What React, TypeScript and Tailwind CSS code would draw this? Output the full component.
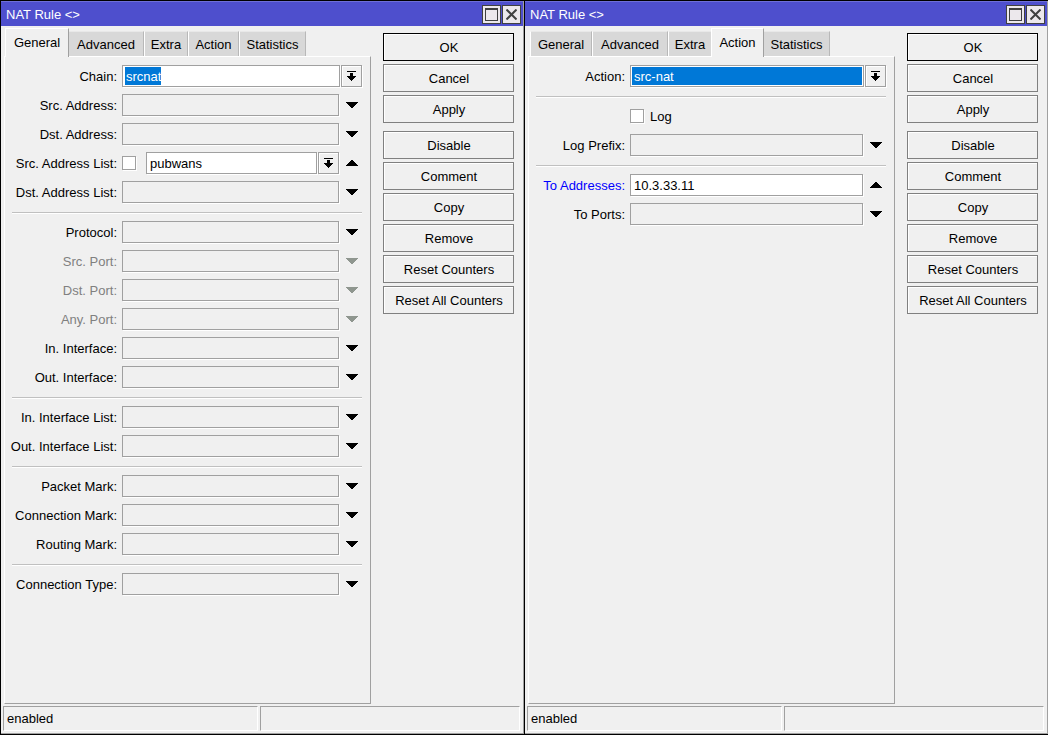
import { ReactNode, useId } from 'react';

const TABS = [
  { name: 'General', width: 'w-[62px]' },
  { name: 'Advanced', width: 'w-[76px]' },
  { name: 'Extra', width: 'w-11' },
  { name: 'Action', width: 'w-[51px]' },
  { name: 'Statistics', width: 'w-[67px]' },
];

const EDGE = 'border border-[#a0a0a0] shadow-[1px_1px_0_#ffffff]';

const Triangle = ({ up = false, muted = false }: { up?: boolean; muted?: boolean }) => (
  <svg
    width="12"
    height="6"
    viewBox="0 0 12 6"
    shapeRendering="crispEdges"
    className={muted ? 'fill-[#8f968f]' : 'fill-black'}
  >
    {up ? (
      <path d="M5 0h2v1h1v1h1v1h1v1h1v1h1v1H0v-1h1v-1h1v-1h1v-1h1v-1h1z" />
    ) : (
      <path d="M0 0h12v1h-1v1h-1v1h-1v1h-1v1h-1v1h-2v-1h-1v-1h-1v-1h-1v-1h-1v-1h-1z" />
    )}
  </svg>
);

const DropButton = ({ label }: { label: string }) => (
  <button
    type="button"
    aria-label={`Choose ${label}`}
    className="flex h-[22px] w-[21px] shrink-0 items-center justify-center border border-[#a0a0a0] bg-[#f0f0f0] shadow-[inset_1px_1px_0_#ffffff,1px_1px_0_#ffffff]"
  >
    <svg width="9" height="10" viewBox="0 0 9 10" shapeRendering="crispEdges" className="fill-black">
      <path d="M0 0h9v1H0zM3 2h3v3h3v1h-1v1h-1v1h-1v1h-1v1h-1v-1h-1v-1h-1v-1h-1v-1h-1v-1h3z" />
    </svg>
  </button>
);

interface RowProps {
  label: string;
  labelWidth: string;
  id: string;
  tone?: string;
  children: ReactNode;
}

const Row = ({ label, labelWidth, id, tone = 'text-black', children }: RowProps) => (
  <div className="flex h-[22px] items-center">
    <label htmlFor={id} className={`mr-[5px] flex shrink-0 justify-end pt-0.5 whitespace-nowrap ${labelWidth} ${tone}`}>
      {label}
    </label>
    {children}
  </div>
);

interface FieldProps {
  label: string;
  value?: string;
  labelWidth?: string;
  tone?: string;
  muted?: boolean;
  invert?: boolean;
  combo?: boolean;
}

const Field = ({ label, value, labelWidth = 'w-[105px]', tone, muted, invert, combo }: FieldProps) => {
  const id = useId();
  const open = value !== undefined;
  return (
    <Row label={label} labelWidth={labelWidth} id={id} tone={muted ? 'text-[#808080]' : tone}>
      {invert && (
        <input
          type="checkbox"
          aria-label={`Not ${label}`}
          className={`mr-2.5 size-3.5 shrink-0 appearance-none bg-white ${EDGE}`}
        />
      )}
      <input
        id={id}
        type="text"
        defaultValue={value}
        disabled={muted}
        className={`h-[22px] min-w-0 flex-1 px-[3px] outline-none ${EDGE} ${open ? 'bg-white' : 'bg-[#f0f0f0]'}`}
      />
      {combo && (
        <div className="ml-px flex">
          <DropButton label={label} />
        </div>
      )}
      <button
        type="button"
        aria-label={`${open ? 'Collapse' : 'Expand'} ${label}`}
        disabled={muted}
        className="ml-0.5 flex h-[22px] w-[21px] shrink-0 items-center justify-center"
      >
        <Triangle up={open} muted={muted} />
      </button>
    </Row>
  );
};

const Separator = () => <hr className="mt-0.5 h-0.5 border-0 border-t border-[#c0c0c0] bg-white" />;

const ChainField = () => {
  const id = useId();
  return (
    <Row label="Chain:" labelWidth="w-[105px]" id={id}>
      <div className={`mr-px flex h-[22px] min-w-0 flex-1 items-center bg-white p-px ${EDGE}`}>
        <input
          id={id}
          type="text"
          defaultValue="srcnat"
          className="ml-px h-[18px] bg-[#0078d7] pl-px text-white outline-none [field-sizing:content]"
        />
      </div>
      <DropButton label="Chain" />
    </Row>
  );
};

const ActionField = () => {
  const id = useId();
  return (
    <Row label="Action:" labelWidth="w-[89px]" id={id}>
      <div className={`mr-px flex h-[22px] min-w-0 flex-1 bg-white p-px ${EDGE}`}>
        <select
          id={id}
          defaultValue="src-nat"
          className="h-[18px] min-w-0 flex-1 appearance-none bg-[#0078d7] px-0.5 pt-0.5 text-white outline-none"
        >
          <option>src-nat</option>
        </select>
      </div>
      <DropButton label="Action" />
    </Row>
  );
};

const GeneralTab = () => (
  <>
    <ChainField />
    <Field label="Src. Address:" />
    <Field label="Dst. Address:" />
    <Field label="Src. Address List:" value="pubwans" invert combo />
    <Field label="Dst. Address List:" />
    <Separator />
    <Field label="Protocol:" />
    <Field label="Src. Port:" muted />
    <Field label="Dst. Port:" muted />
    <Field label="Any. Port:" muted />
    <Field label="In. Interface:" />
    <Field label="Out. Interface:" />
    <Separator />
    <Field label="In. Interface List:" />
    <Field label="Out. Interface List:" />
    <Separator />
    <Field label="Packet Mark:" />
    <Field label="Connection Mark:" />
    <Field label="Routing Mark:" />
    <Separator />
    <Field label="Connection Type:" />
  </>
);

const ActionTab = () => (
  <>
    <ActionField />
    <Separator />
    <label className="ml-[94px] flex h-[22px] items-center gap-1.5">
      <input type="checkbox" className={`size-3.5 appearance-none bg-white ${EDGE}`} />
      <span className="pt-0.5">Log</span>
    </label>
    <Field label="Log Prefix:" labelWidth="w-[89px]" />
    <Separator />
    <Field label="To Addresses:" labelWidth="w-[89px]" value="10.3.33.11" tone="text-[#0000ff]" />
    <Field label="To Ports:" labelWidth="w-[89px]" />
  </>
);

const Tabs = ({ active }: { active: string }) => (
  <div role="tablist" className="ml-0.5 flex h-[30px] items-end">
    {TABS.map(({ name, width }) => (
      <div key={name} className={`flex shrink-0 ${width}`}>
        <button
          type="button"
          role="tab"
          aria-selected={name === active}
          className={
            name === active
              ? 'relative -mx-px -mb-px h-[29px] flex-1 border-t border-r border-l border-t-white border-r-[#a0a0a0] border-l-white bg-[#f0f0f0]'
              : 'h-[25px] flex-1 border-t border-r border-l border-t-[#e8e8e8] border-r-[#b8b8b8] border-l-white bg-[#d8d8d8] pt-0.5'
          }
        >
          {name}
        </button>
      </div>
    ))}
  </div>
);

const ActionButton = ({ name, primary = false }: { name: string; primary?: boolean }) => (
  <button
    type="button"
    className={`h-7 border bg-[#f0f0f0] pt-0.5 pl-px whitespace-nowrap shadow-[inset_1px_1px_0_#ffffff] ${
      primary ? 'border-black' : 'border-[#808080]'
    }`}
  >
    {name}
  </button>
);

const TitleButton = ({ label, children }: { label: string; children: ReactNode }) => (
  <button
    type="button"
    aria-label={label}
    className="flex size-[19px] items-center justify-center border border-[#404040] bg-[#ece8ec]"
  >
    {children}
  </button>
);

const RuleWindow = ({ active, children }: { active: string; children: ReactNode }) => (
  <section className="flex min-w-0 flex-1 flex-col border-t border-b border-l border-black">
    <div className="flex flex-1 flex-col border-r border-b border-[#a0a0a0] bg-[#f0f0f0]">
      <header className="flex h-[25px] items-center border-t border-[#6e6fd8] bg-[#4e4fcd] pt-px pr-0.5 pl-[5px] text-white">
        <h2 className="flex-1 pt-px">NAT Rule &lt;&gt;</h2>
        <div className="flex gap-px">
          <TitleButton label="Maximize">
            <svg width="13" height="13" viewBox="0 0 13 13" shapeRendering="crispEdges" className="fill-[#404040]">
              <path fillRule="evenodd" d="M0 0h13v13H0zM1 2v10h11V2z" />
            </svg>
          </TitleButton>
          <TitleButton label="Close">
            <svg width="11" height="11" viewBox="0 0 11 11" className="stroke-[#404040]" strokeWidth="2">
              <path d="M0.5 0.5l10 10M10.5 0.5l-10 10" />
            </svg>
          </TitleButton>
        </div>
      </header>

      <div className="flex flex-1 pr-[9px] pl-[3px]">
        <div className="flex min-w-0 flex-1 flex-col">
          <Tabs active={active} />
          <div
            role="tabpanel"
            className="flex flex-1 flex-col gap-[7px] border border-t-white border-r-[#a0a0a0] border-b-[#a0a0a0] border-l-white pt-2 pr-2 pb-2 pl-[7px]"
          >
            {children}
          </div>
        </div>
        <div className="ml-3 flex w-[131px] shrink-0 flex-col gap-2 pt-[7px]">
          <div className="flex flex-col gap-[3px]">
            <ActionButton name="OK" primary />
            <ActionButton name="Cancel" />
            <ActionButton name="Apply" />
          </div>
          <div className="flex flex-col gap-[3px]">
            <ActionButton name="Disable" />
            <ActionButton name="Comment" />
            <ActionButton name="Copy" />
            <ActionButton name="Remove" />
            <ActionButton name="Reset Counters" />
            <ActionButton name="Reset All Counters" />
          </div>
        </div>
      </div>

      <footer className="mt-0.5 mr-[3px] mb-0.5 ml-0.5 flex h-[25px] gap-0.5">
        <div className="flex w-[255px] items-center border border-t-[#a0a0a0] border-r-white border-b-white border-l-[#a0a0a0] pl-[3px]">
          enabled
        </div>
        <div className="flex-1 border border-t-[#a0a0a0] border-r-white border-b-white border-l-[#a0a0a0]" />
      </footer>
    </div>
  </section>
);

export default function App() {
  return (
    <main className="flex min-h-screen font-['Liberation_Sans',Arial,sans-serif] text-[13px] leading-4 text-black">
      <RuleWindow active="General">
        <GeneralTab />
      </RuleWindow>
      <RuleWindow active="Action">
        <ActionTab />
      </RuleWindow>
    </main>
  );
}
